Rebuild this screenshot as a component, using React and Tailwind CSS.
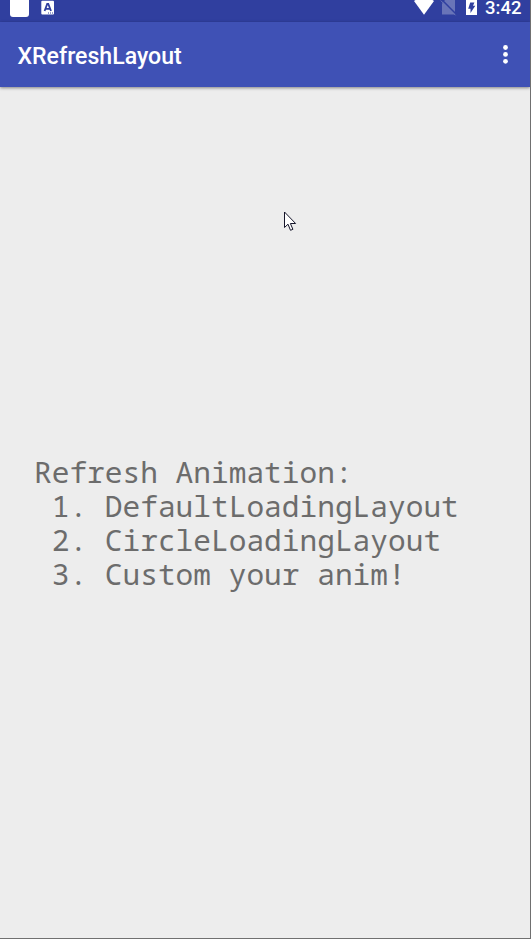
import React from "react";

const lines = [
  "Refresh Animation:",
  " 1. DefaultLoadingLayout",
  " 2. CircleLoadingLayout",
  " 3. Custom your anim!",
];

function StatusBar() {
  return (
    <div className="flex h-[22px] justify-between bg-[#303f9f] text-white">
      <div className="flex">
        <div className="ml-[10px] h-[17px] w-[19px] rounded-b-[3px] bg-white" />
        <svg className="ml-3" width="14" height="16" viewBox="0 0 14 16">
          <rect x="0.3" y="0.8" width="12.7" height="13.8" rx="1" fill="#fff" />
          <path d="M3.6 11 6.2 4h1.1L10 11M4.6 8.9h4.4" fill="none" stroke="#303f9f" strokeWidth="1.8" />
          <path d="M7 13h1M9 13h1M11 13h1" stroke="#303f9f" strokeWidth="1" />
        </svg>
      </div>
      <div className="flex">
        <svg width="70" height="20" viewBox="0 0 70 20">
          <path d="M0 1C5-3 15-3 20 1L10 14.7Z" fill="#fff" />
          <path d="M31 0h10v14.5H28V3.5Z" fill="#6974b8" />
          <path d="M28 0 42 14" stroke="#303f9f" strokeWidth="1.6" />
          <path d="M26.8 .6 41.5 15.3" stroke="#6974b8" strokeWidth="1" />
          <path d="M52 0h11v15H52Z" fill="#fff" />
          <path d="M56.2 2.5h4.2L59 5.8h2.3L56.5 13V8.8h-2.3Z" fill="#303f9f" />
        </svg>
        <span className="mr-[8.5px] pl-px font-['Roboto'] text-[18.5px] leading-[16px] font-medium">3:42</span>
      </div>
    </div>
  );
}

function AppBar() {
  return (
    <header className="relative flex h-[65px] items-center justify-between bg-[#3f51b5] pl-[17.5px] shadow-[0_1px_3px_rgba(0,0,0,0.45)]">
      <h1 className="pt-[5px] font-['Roboto'] text-[23.1px] font-medium text-white">XRefreshLayout</h1>
      <svg className="mr-[21px]" width="8" height="22" viewBox="0 0 8 22" fill="#fff">
        <circle cx="4.5" cy="3.5" r="2.4" />
        <circle cx="4.5" cy="10.4" r="2.4" />
        <circle cx="4.5" cy="17.3" r="2.4" />
      </svg>
    </header>
  );
}

export default function App() {
  return (
    <div className="relative h-[939px] w-[531px] overflow-hidden border-r border-b border-[#707070] bg-[#ededed]">
      <StatusBar />
      <AppBar />
      <main className="pt-[368px] pl-[34px]">
        <pre className="font-['Noto_Sans_Mono','DejaVu_Sans_Mono',monospace] text-[29.5px] leading-[34px] text-[#6c6c6c]">
          {lines.join("\n")}
        </pre>
      </main>
      <svg className="absolute top-[211px] left-[284px]" width="13" height="21" viewBox="0 0 13 21">
        <path d="M.5 1v15.5l3.5-3.3 2.5 6.1 2.4-1-2.5-5.8h5.2Z" fill="#fff" stroke="#15152a" />
      </svg>
    </div>
  );
}
